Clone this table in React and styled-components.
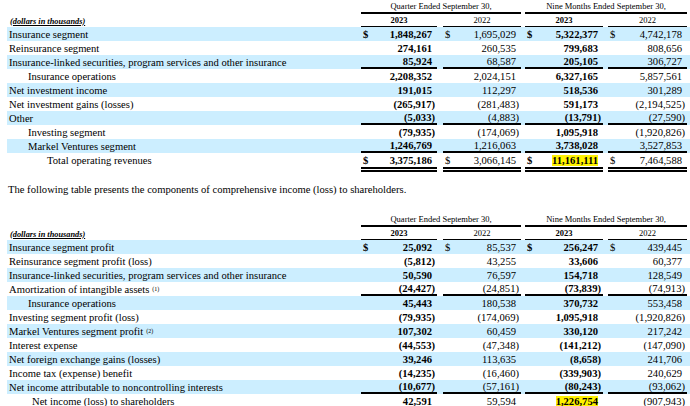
import React from 'react';
import styled, { createGlobalStyle } from 'styled-components';

const GlobalStyle = createGlobalStyle`
  html, body {
    margin: 0;
    padding: 0;
    background: #fff;
  }
  body {
    font-family: "Liberation Serif", "Times New Roman", serif;
    color: #000;
  }
`;

const COLS = '354px 76px 6px 78px 4px 78px 5px 79px 1fr';

const Page = styled.div`
  width: 690px;
  overflow: hidden;
`;

const FinTable = styled.div`
  display: flex;
  flex-direction: column;
  padding-left: 7px;
`;

const Row = styled.div`
  display: grid;
  grid-template-columns: ${COLS};
  height: ${(p) => (p.$rule === 'double' ? 19 : 14)}px;
  background: ${(p) => (p.$shade ? '#cceeff' : 'transparent')};
  font-size: 10.6px;
`;

const HeadRow = styled.div`
  display: grid;
  grid-template-columns: ${COLS};
  height: ${(p) => p.$h}px;
  font-size: 8.5px;
`;

const Label = styled.div`
  display: flex;
  align-items: center;
  padding-left: ${(p) => 2 + (p.$indent || 0)}px;
  white-space: nowrap;
  height: 14px;
`;

const Units = styled.span`
  font-size: 8.3px;
  font-style: italic;
  font-weight: bold;
  text-decoration: underline;
  padding-left: 1px;
`;

const Sup = styled.sup`
  font-size: 6px;
  vertical-align: 4px;
  line-height: 0;
  margin-left: 3px;
`;

const Period = styled.div`
  grid-column: ${(p) => p.$col};
  display: flex;
  align-items: center;
  justify-content: center;
  border-bottom: 2px solid #000;
  box-sizing: border-box;
  white-space: nowrap;
`;

const Year = styled.div`
  display: flex;
  align-items: center;
  justify-content: center;
  border-bottom: 2px solid #000;
  box-sizing: border-box;
  font-weight: ${(p) => (p.$bold ? 'bold' : 'normal')};
`;

const Value = styled.div`
  display: flex;
  align-items: center;
  justify-content: space-between;
  padding: 0 5px 0 2px;
  box-sizing: border-box;
  white-space: nowrap;
  font-weight: ${(p) => (p.$bold ? 'bold' : 'normal')};
  border-bottom: ${(p) =>
    p.$rule === 'double' ? '5px double #000' : p.$rule === 'single' ? '2px solid #000' : 'none'};
`;

const Num = styled.span`
  margin-left: auto;
  background: ${(p) => (p.$hl ? '#fff200' : 'transparent')};
`;

const Paren = styled.span`
  margin-right: -3px;
`;

const Para = styled.p`
  margin: 11px 0 16px 8px;
  font-size: 10.6px;
  line-height: 14px;
`;

const YEARS = ['2023', '2022', '2023', '2022'];
const VALUE_COLS = [2, 4, 6, 8];

const revenues = [
  { label: 'Insurance segment', shade: true, dollar: true, vals: ['1,848,267', '1,695,029', '5,322,377', '4,742,178'] },
  { label: 'Reinsurance segment', vals: ['274,161', '260,535', '799,683', '808,656'] },
  { label: 'Insurance-linked securities, program services and other insurance', shade: true, rule: 'single', vals: ['85,924', '68,587', '205,105', '306,727'] },
  { label: 'Insurance operations', indent: 19, vals: ['2,208,352', '2,024,151', '6,327,165', '5,857,561'] },
  { label: 'Net investment income', shade: true, vals: ['191,015', '112,297', '518,536', '301,289'] },
  { label: 'Net investment gains (losses)', vals: ['(265,917)', '(281,483)', '591,173', '(2,194,525)'] },
  { label: 'Other', shade: true, rule: 'single', vals: ['(5,033)', '(4,883)', '(13,791)', '(27,590)'] },
  { label: 'Investing segment', indent: 19, vals: ['(79,935)', '(174,069)', '1,095,918', '(1,920,826)'] },
  { label: 'Markel Ventures segment', indent: 19, shade: true, rule: 'single', vals: ['1,246,769', '1,216,063', '3,738,028', '3,527,853'] },
  { label: 'Total operating revenues', indent: 38, dollar: true, rule: 'double', hl: 2, vals: ['3,375,186', '3,066,145', '11,161,111', '7,464,588'] },
];

const income = [
  { label: 'Insurance segment profit', shade: true, dollar: true, vals: ['25,092', '85,537', '256,247', '439,445'] },
  { label: 'Reinsurance segment profit (loss)', vals: ['(5,812)', '43,255', '33,606', '60,377'] },
  { label: 'Insurance-linked securities, program services and other insurance', shade: true, vals: ['50,590', '76,597', '154,718', '128,549'] },
  { label: 'Amortization of intangible assets', note: '(1)', rule: 'single', vals: ['(24,427)', '(24,851)', '(73,839)', '(74,913)'] },
  { label: 'Insurance operations', indent: 19, shade: true, vals: ['45,443', '180,538', '370,732', '553,458'] },
  { label: 'Investing segment profit (loss)', vals: ['(79,935)', '(174,069)', '1,095,918', '(1,920,826)'] },
  { label: 'Markel Ventures segment profit', note: '(2)', shade: true, vals: ['107,302', '60,459', '330,120', '217,242'] },
  { label: 'Interest expense', vals: ['(44,553)', '(47,348)', '(141,212)', '(147,090)'] },
  { label: 'Net foreign exchange gains (losses)', shade: true, vals: ['39,246', '113,635', '(8,658)', '241,706'] },
  { label: 'Income tax (expense) benefit', vals: ['(14,235)', '(16,460)', '(339,903)', '240,629'] },
  { label: 'Net income attributable to noncontrolling interests', shade: true, rule: 'single', vals: ['(10,677)', '(57,161)', '(80,243)', '(93,062)'] },
  { label: 'Net income (loss) to shareholders', indent: 23, rule: 'double', hl: 2, vals: ['42,591', '59,594', '1,226,754', '(907,943)'] },
];

const Amount = ({ value, highlight }) => {
  const negative = value.startsWith('(');
  return (
    <Num $hl={highlight}>
      {negative ? value.slice(0, -1) : value}
      {negative && <Paren>)</Paren>}
    </Num>
  );
};

const Header = () => (
  <>
    <HeadRow $h={14}>
      <div />
      <Period $col="2 / 5">Quarter Ended September 30,</Period>
      <Period $col="6 / 9">Nine Months Ended September 30,</Period>
    </HeadRow>
    <HeadRow $h={13}>
      <Label>
        <Units>(dollars in thousands)</Units>
      </Label>
      {YEARS.map((year, i) => (
        <Year key={i} $bold={i % 2 === 0} style={{ gridColumn: VALUE_COLS[i] }}>
          {year}
        </Year>
      ))}
    </HeadRow>
  </>
);

const Statement = ({ rows }) => (
  <FinTable>
    <Header />
    {rows.map((row) => (
      <Row key={row.label} $shade={row.shade} $rule={row.rule}>
        <Label $indent={row.indent}>
          {row.label}
          {row.note && <Sup>{row.note}</Sup>}
        </Label>
        {row.vals.map((v, i) => (
          <React.Fragment key={i}>
            <Value $bold={i % 2 === 0} $rule={row.rule}>
              {row.dollar && <span>$</span>}
              <Amount value={v} highlight={row.hl === i} />
            </Value>
            {i < 3 && <div />}
          </React.Fragment>
        ))}
      </Row>
    ))}
  </FinTable>
);

const App = () => (
  <Page>
    <GlobalStyle />
    <Statement rows={revenues} />
    <Para>The following table presents the components of comprehensive income (loss) to shareholders.</Para>
    <Statement rows={income} />
  </Page>
);

export default App;
